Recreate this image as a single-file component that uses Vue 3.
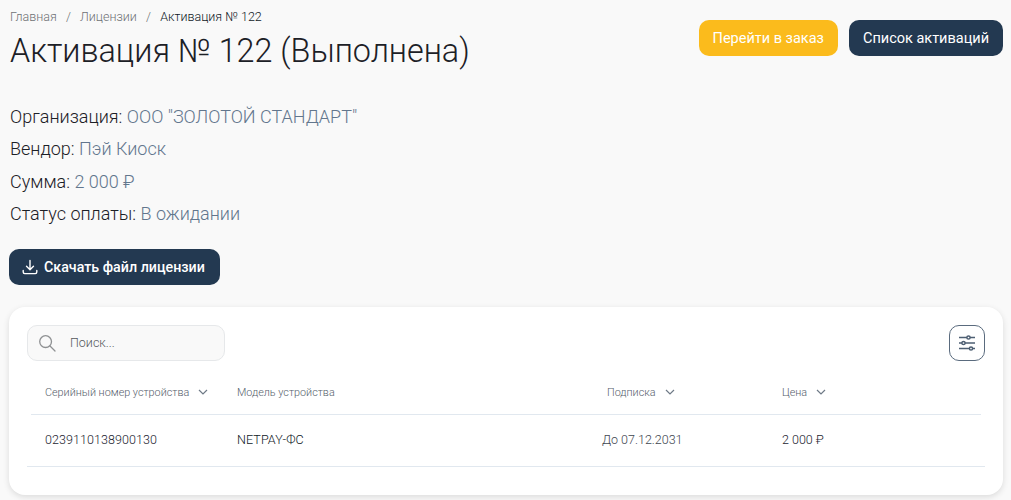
<script setup>
const info = [
  { label: 'Организация:', value: 'ООО "ЗОЛОТОЙ СТАНДАРТ"' },
  { label: 'Вендор:', value: 'Пэй Киоск' },
  { label: 'Сумма:', value: '2 000 ₽' },
  { label: 'Статус оплаты:', value: 'В ожидании' },
]
</script>

<template>
  <div class="page">
    <header class="top">
      <div class="heading">
        <nav class="crumbs">
          <span class="crumb">Главная</span><span class="sep">/</span>
          <span class="crumb">Лицензии</span><span class="sep">/</span>
          <span class="crumb current">Активация № 122</span>
        </nav>
        <h1 class="title">Активация № 122 (Выполнена)</h1>
      </div>
      <div class="actions">
        <button class="btn yellow">Перейти в заказ</button>
        <button class="btn dark">Список активаций</button>
      </div>
    </header>

    <section class="info">
      <p v-for="row in info" :key="row.label" class="info-row">
        {{ row.label }} <span class="info-value">{{ row.value }}</span>
      </p>
    </section>

    <button class="btn dark download">
      <svg width="16" height="16" viewBox="0 0 16 16" fill="none" stroke="#fff" stroke-width="1.4" stroke-linecap="round" stroke-linejoin="round">
        <path d="M8 1.5v9M4.5 7.2 8 10.7l3.5-3.5M1.2 11.5v1.6c0 .9.6 1.5 1.5 1.5h10.6c.9 0 1.5-.6 1.5-1.5v-1.6" />
      </svg>
      Скачать файл лицензии
    </button>

    <section class="card">
      <div class="toolbar">
        <label class="search">
          <svg width="18" height="18" viewBox="0 0 18 18" fill="none" stroke="#8f9193" stroke-width="1.3" stroke-linecap="round">
            <circle cx="7.6" cy="7.6" r="5.9" />
            <path d="m12 12 5 5" />
          </svg>
          <span class="placeholder">Поиск...</span>
        </label>
        <button class="filter">
          <svg width="18" height="16" viewBox="0 0 18 16" fill="none" stroke="#4e5f73" stroke-width="1.5">
            <path d="M1 2.5h8M12 2.5h5M1 8h3M7 8h10M1 13.5h10.5M14.5 13.5H17" />
            <circle cx="10.5" cy="2.5" r="1.6" />
            <circle cx="5.5" cy="8" r="1.6" />
            <circle cx="13" cy="13.5" r="1.6" />
          </svg>
        </button>
      </div>

      <div class="thead">
        <div class="th">Серийный номер устройства
          <svg class="chev" width="10" height="6" viewBox="0 0 10 6" fill="none" stroke="#6f7a87" stroke-width="1.2"><path d="m1 1 4 4 4-4" /></svg>
        </div>
        <div class="th">Модель устройства</div>
        <div class="th">Подписка
          <svg class="chev" width="10" height="6" viewBox="0 0 10 6" fill="none" stroke="#6f7a87" stroke-width="1.2"><path d="m1 1 4 4 4-4" /></svg>
        </div>
        <div class="th">Цена
          <svg class="chev" width="10" height="6" viewBox="0 0 10 6" fill="none" stroke="#6f7a87" stroke-width="1.2"><path d="m1 1 4 4 4-4" /></svg>
        </div>
      </div>
      <div class="tbody">
        <div class="td serial">0239110138900130</div>
        <div class="td model">NETPAY-ФС</div>
        <div class="td date">До 07.12.2031</div>
        <div class="td">2 000 ₽</div>
      </div>
    </section>
  </div>
</template>

<style>
html, body { margin: 0; background: #f9f9f9; }
</style>

<style scoped>
.page {
  box-sizing: border-box;
  height: 500px;
  padding: 0 8px 0 9px;
  background: #f9f9f9;
  font-family: Roboto, "Liberation Sans", sans-serif;
  color: #1c2430;
  overflow: hidden;
}
.top { display: flex; justify-content: space-between; align-items: flex-start; }
.heading { padding-left: 1px; }
.crumbs { display: flex; align-items: center; height: 14px; margin-top: 10px; font-size: 12.5px; font-weight: 300; line-height: 14px; }
.crumb { color: #6f7175; font-weight: 300; }
.current { color: #0f1826; font-weight: 300; }
.sep { margin: 0 9.2px; color: #6f7175; }
.title { margin: 5px 0 0; font-size: 32.3px; line-height: 44px; font-weight: 300; color: #1c2026; }
.actions { display: flex; gap: 11px; margin-top: 20px; }
.btn {
  height: 36px;
  border: 0;
  border-radius: 10px;
  padding: 0 14px;
  font: 400 14.5px Roboto, sans-serif;
  color: #fff;
  cursor: pointer;
}
.yellow { background: #fbbb1c; }
.dark { background: #233951; }
.info { margin-top: 28px; }
.info-row { margin: 0; height: 32.4px; line-height: 32.4px; font-size: 18px; font-weight: 300; color: #1c2026; padding-left: 1px; }
.info-value { color: #62768d; }
.download { display: flex; align-items: center; gap: 6px; margin-top: 18px; padding: 0 15px 0 13px; font-size: 14.25px; font-weight: 500; }
.card {
  box-sizing: border-box;
  height: 188px;
  margin-top: 22px;
  padding: 18px 18px 0;
  background: #fff;
  border-radius: 16px;
  box-shadow: 0 2px 6px rgba(0, 0, 0, .12);
}
.toolbar { display: flex; justify-content: space-between; }
.search {
  box-sizing: border-box;
  display: flex;
  align-items: center;
  gap: 14px;
  width: 198px;
  height: 36px;
  padding-left: 10px;
  background: #f9f9f9;
  border: 1px solid #e6e8ea;
  border-radius: 10px;
}
.placeholder { font-size: 12.5px; font-weight: 300; color: #55585c; }
.filter {
  box-sizing: border-box;
  display: flex;
  align-items: center;
  justify-content: center;
  width: 36px;
  height: 36px;
  padding: 0;
  background: #fff;
  border: 1px solid #5a6b7e;
  border-radius: 10px;
}
.thead, .tbody { display: grid; grid-template-columns: 192px 370px 175px 1fr; align-items: center; }
.thead {
  height: 54px;
  margin: 0 4px;
  padding: 10px 0 0 14px;
  border-bottom: 1px solid #e1e8ef;
  box-sizing: border-box;
}
.tbody {
  height: 52px;
  padding: 0 0 2px 18px;
  border-bottom: 1px solid #e1e8ef;
  box-sizing: border-box;
}
.th { display: flex; align-items: center; gap: 9px; font-size: 10.8px; font-weight: 300; color: #55606c; white-space: nowrap; }
.td { font-size: 12.5px; font-weight: 300; color: #1c2430; }
.serial { letter-spacing: .06px; }
.model { font-weight: 300; letter-spacing: .1px; color: #0f1826; }
.date { margin-left: -5px; color: #3e4650; }
</style>
